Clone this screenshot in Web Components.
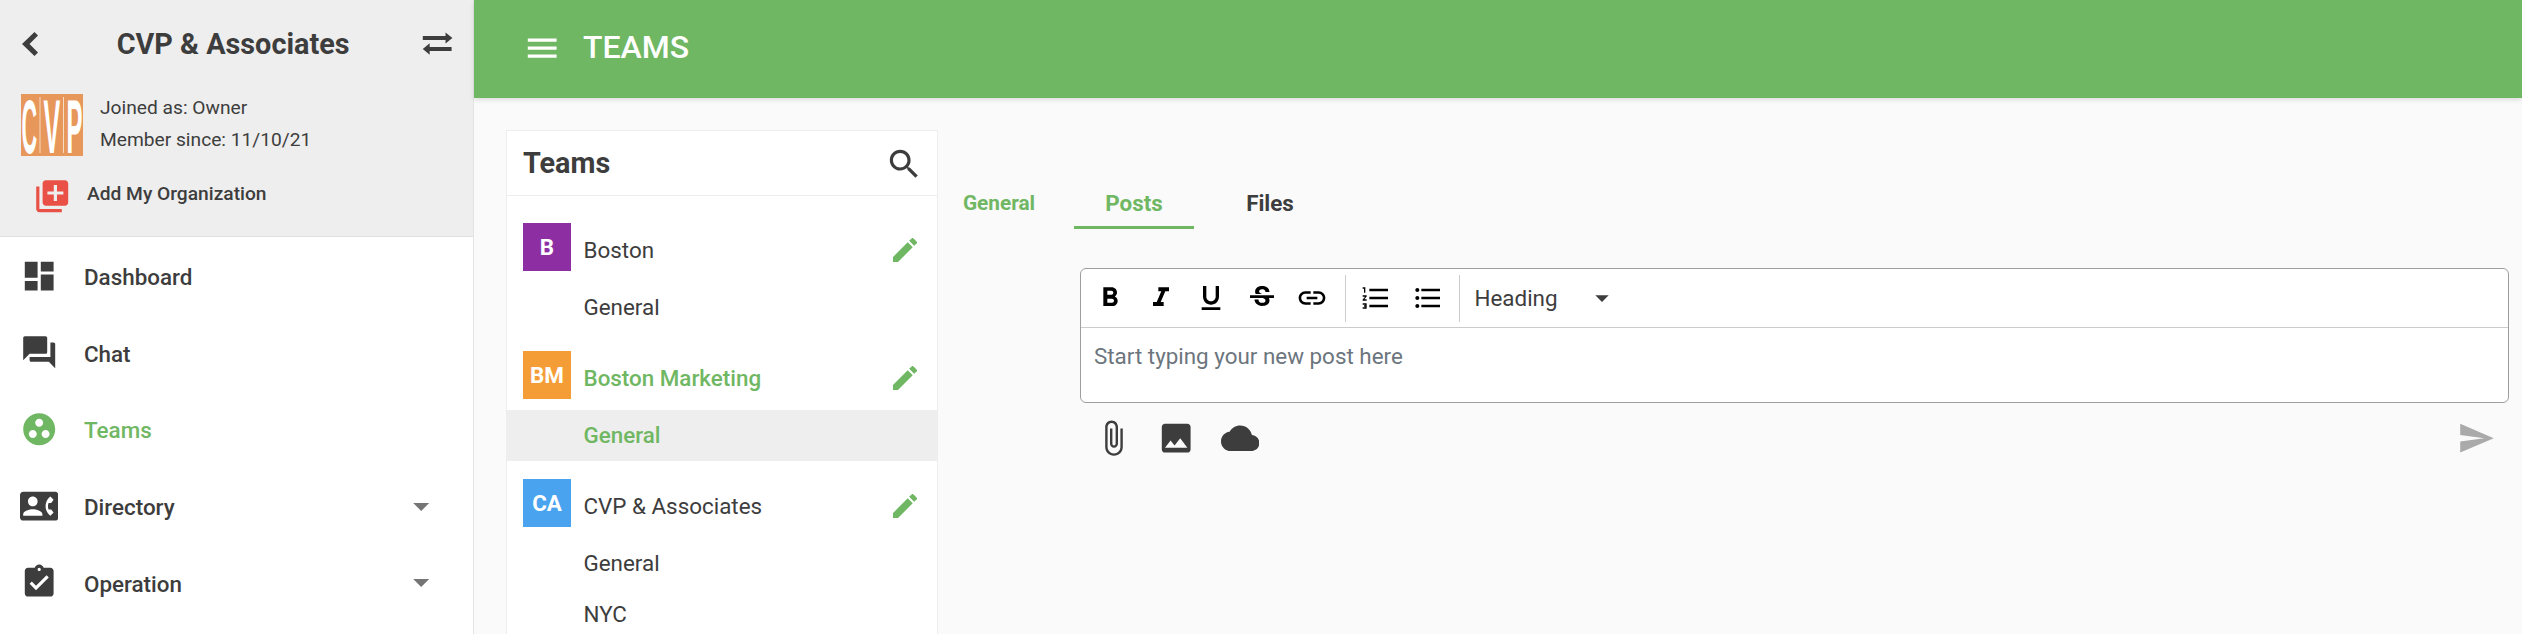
<!DOCTYPE html>
<html>
<head>
<meta charset="utf-8">
<title>Teams</title>
<style>
  html, body { margin: 0; height: 100%; overflow: hidden; }
  body { font-family: Roboto, "Liberation Sans", sans-serif; color: #3d3d3d; background: #fafafa; }
</style>
</head>
<body>
<app-shell>
  <side-bar slot="side"></side-bar>
  <top-bar slot="top" title="TEAMS"></top-bar>
  <teams-panel slot="panel"></teams-panel>
  <post-area slot="content"></post-area>
</app-shell>

<script>
const ICONS = {
  dashboard: 'M3 13h8V3H3v10zm0 8h8v-6H3v6zm10 0h8V11h-8v10zm0-18v6h8V3h-8z',
  forum: 'M21 6h-2v9H6v2c0 .55.45 1 1 1h11l4 4V7c0-.55-.45-1-1-1zm-4 6V3c0-.55-.45-1-1-1H3c-.55 0-1 .45-1 1v14l4-4h10c.55 0 1-.45 1-1z',
  workspaces: 'M12 2C6.48 2 2 6.48 2 12s4.48 10 10 10 10-4.48 10-10S17.52 2 12 2zM8 17.5c-1.38 0-2.5-1.12-2.5-2.5s1.12-2.5 2.5-2.5 2.5 1.12 2.5 2.5-1.12 2.5-2.5 2.5zM9.5 8c0-1.38 1.12-2.5 2.5-2.5s2.5 1.12 2.5 2.5-1.12 2.5-2.5 2.5S9.5 9.38 9.5 8zm6.5 9.5c-1.38 0-2.5-1.12-2.5-2.5s1.12-2.5 2.5-2.5 2.5 1.12 2.5 2.5-1.12 2.5-2.5 2.5z',
  contact: 'M22 3H2C.9 3 0 3.9 0 5v14c0 1.1.9 2 2 2h20c1.1 0 1.99-.9 1.99-2L24 5c0-1.1-.9-2-2-2zM8 6c1.66 0 3 1.34 3 3s-1.34 3-3 3-3-1.34-3-3 1.34-3 3-3zm6 12H2v-1c0-2 4-3.1 6-3.1s6 1.1 6 3.1v1zm3.85-4h1.64L21 16l-1.99 1.99c-1.31-.98-2.28-2.38-2.73-3.99-.18-.64-.28-1.31-.28-2s.1-1.36.28-2c.45-1.62 1.42-3.01 2.73-3.99L21 8l-1.51 2h-1.64c-.22.63-.35 1.3-.35 2s.13 1.37.35 2z',
  assignment: 'M19 3h-4.18C14.4 1.84 13.3 1 12 1c-1.3 0-2.4.84-2.82 2H5c-1.1 0-2 .9-2 2v14c0 1.1.9 2 2 2h14c1.1 0 2-.9 2-2V5c0-1.1-.9-2-2-2zm-7 0c.55 0 1 .45 1 1s-.45 1-1 1-1-.45-1-1 .45-1 1-1zm-2 14l-4-4 1.41-1.41L10 14.17l6.59-6.59L18 9l-8 8z',
  drop: 'M7 10l5 5 5-5z',
  back: 'M8 12L14.25 6 16 7.75 11.75 12 16 16.25 14.25 18z',
  swap: 'M3 6.9h14.2V4.7L21.5 8.1l-4.3 3.4V9.4H3zM21 13.75H7.3V11.4L3 15l4.3 3.6v-2.35H21z',
  libraryadd: 'M4 6H2v14c0 1.1.9 2 2 2h14v-2H4V6zm16-4H8c-1.1 0-2 .9-2 2v12c0 1.1.9 2 2 2h12c1.1 0 2-.9 2-2V4c0-1.1-.9-2-2-2zm-1 9h-4v4h-2v-4H9V9h4V5h2v4h4v2z',
  search: 'M15.5 14h-.79l-.28-.27C15.41 12.59 16 11.11 16 9.5 16 5.91 13.09 3 9.5 3S3 5.91 3 9.5 5.91 16 9.5 16c1.61 0 3.09-.59 4.23-1.57l.27.28v.79l5 4.99L20.49 19l-4.99-5zm-6 0C7.01 14 5 11.99 5 9.5S7.01 5 9.5 5 14 7.01 14 9.5 11.99 14 9.5 14z',
  edit: 'M3 17.25V21h3.75L17.81 9.94l-3.75-3.75L3 17.25zM20.71 7.04c.39-.39.39-1.02 0-1.41l-2.34-2.34c-.39-.39-1.02-.39-1.41 0l-1.83 1.83 3.75 3.75 1.83-1.83z',
  menu: 'M3 18h18v-2H3v2zm0-5h18v-2H3v2zm0-7v2h18V6H3z',
  bold: 'M15.6 10.79c.97-.67 1.65-1.77 1.65-2.79 0-2.26-1.75-4-4-4H7v14h7.04c2.09 0 3.71-1.7 3.71-3.79 0-1.52-.86-2.82-2.15-3.42zM10 6.5h3c.83 0 1.5.67 1.5 1.5s-.67 1.5-1.5 1.5h-3v-3zm3.5 9H10v-3h3.5c.83 0 1.5.67 1.5 1.5s-.67 1.5-1.5 1.5z',
  italic: 'M10 4v3h2.21l-3.42 8H6v3h8v-3h-2.21l3.42-8H18V4z',
  underline: 'M12 17c3.31 0 6-2.69 6-6V3h-2.5v8c0 1.93-1.57 3.5-3.5 3.5S8.5 12.93 8.5 11V3H6v8c0 3.31 2.69 6 6 6zm-7 2v2h14v-2H5z',
  strike: 'M6.85 7.08C6.85 4.37 9.45 3 12.24 3c1.64 0 3 .49 3.9 1.28.77.65 1.46 1.73 1.46 3.24h-3.01c0-.31-.05-.59-.15-.85-.29-.86-1.2-1.28-2.25-1.28-1.86 0-2.34 1.02-2.34 1.7 0 .48.25.88.74 1.21.38.25.77.48 1.41.7H7.39c-.21-.34-.54-.89-.54-1.92zM21 12v-2H3v2h9.62c1.15.45 1.96.75 1.96 1.97 0 1-.81 1.67-2.28 1.67-1.54 0-2.93-.54-2.93-2.51H6.4c0 .55.08 1.13.24 1.58.81 2.29 3.29 3.3 5.67 3.3 2.27 0 5.3-.89 5.3-4.05 0-.3-.03-1.16-.41-1.96H21z',
  link: 'M3.9 12c0-1.71 1.39-3.1 3.1-3.1h4V7H7c-2.76 0-5 2.24-5 5s2.24 5 5 5h4v-1.9H7c-1.71 0-3.1-1.39-3.1-3.1zM8 13h8v-2H8v2zm9-6h-4v1.9h4c1.71 0 3.1 1.39 3.1 3.1s-1.39 3.1-3.1 3.1h-4V17h4c2.76 0 5-2.24 5-5s-2.24-5-5-5z',
  olist: 'M2 17h2v.5H3v1h1v.5H2v1h3v-4H2v1zm1-9h1V4H2v1h1v3zm-1 3h1.8L2 13.1v.9h3v-1H3.2L5 10.9V10H2v1zm5-6v2h14V5H7zm0 14h14v-2H7v2zm0-6h14v-2H7v2z',
  ulist: 'M4 10.5c-.83 0-1.5.67-1.5 1.5s.67 1.5 1.5 1.5 1.5-.67 1.5-1.5-.67-1.5-1.5-1.5zm0-6c-.83 0-1.5.67-1.5 1.5S3.17 7.5 4 7.5 5.5 6.83 5.5 6 4.83 4.5 4 4.5zm0 12c-.83 0-1.5.68-1.5 1.5s.68 1.5 1.5 1.5 1.5-.68 1.5-1.5-.67-1.5-1.5-1.5zM7 19h14v-2H7v2zm0-6h14v-2H7v2zm0-8v2h14V5H7z',
  attach: 'M16.5 6v11.5c0 2.21-1.79 4-4 4s-4-1.79-4-4V5c0-1.38 1.12-2.5 2.5-2.5s2.5 1.12 2.5 2.5v10.5c0 .55-.45 1-1 1s-1-.45-1-1V6H10v9.5c0 1.38 1.12 2.5 2.5 2.5s2.5-1.12 2.5-2.5V5c0-2.21-1.79-4-4-4S7 2.79 7 5v12.5c0 3.04 2.46 5.5 5.5 5.5s5.5-2.46 5.5-5.5V6h-1.5z',
  image: 'M21 19V5c0-1.1-.9-2-2-2H5c-1.1 0-2 .9-2 2v14c0 1.1.9 2 2 2h14c1.1 0 2-.9 2-2zM8.5 13.5l2.5 3.01L14.5 12l4.5 6H5l3.5-4.5z',
  cloud: 'M19.35 10.04C18.67 6.59 15.64 4 12 4 9.11 4 6.6 5.64 5.35 8.04 2.34 8.36 0 10.91 0 14c0 3.31 2.69 6 6 6h13c2.76 0 5-2.24 5-5 0-2.64-2.05-4.78-4.65-4.96z',
  send: 'M2.01 21L23 12 2.01 3 2 10l15 2-15 2z'
}

class MIcon extends HTMLElement {
  connectedCallback() {
    const size = this.getAttribute('size') || 38.4
    this.attachShadow({ mode: 'open' }).innerHTML = `
      <style>
        :host { display: inline-flex; flex: none; width: ${size}px; height: ${size}px; color: inherit; }
        svg { width: 100%; height: 100%; fill: currentColor; display: block; }
      </style>
      <svg viewBox="0 0 24 24"><path fill-rule="evenodd" d="${ICONS[this.getAttribute('name')]}"/></svg>`
  }
}
customElements.define('m-icon', MIcon)

class AppShell extends HTMLElement {
  constructor() {
    super()
    this.attachShadow({ mode: 'open' }).innerHTML = `
      <style>
        :host { display: flex; width: 2522px; height: 634px; overflow: hidden; }
        .main { flex: 1; min-width: 0; display: flex; flex-direction: column; }
        .body { flex: 1; display: flex; padding: 32px 0 0 32px; min-height: 0; }
        .right { flex: 1; min-width: 0; }
      </style>
      <slot name="side"></slot>
      <div class="main">
        <slot name="top"></slot>
        <div class="body">
          <slot name="panel"></slot>
          <div class="right"><slot name="content"></slot></div>
        </div>
      </div>`
  }
}
customElements.define('app-shell', AppShell)

class SideBar extends HTMLElement {
  constructor() {
    super()
    this.attachShadow({ mode: 'open' }).innerHTML = `
      <style>
        :host { display: block; width: 474px; height: 634px; flex: none; box-sizing: border-box; border-right: 1px solid #e4e4e4; background: #fff; }
        .head { height: 237px; box-sizing: border-box; background: #eee; border-bottom: 1px solid #e0e0e0; padding-top: 20px; }
        .title { display: flex; align-items: center; height: 48px; padding: 0 16.4px 0 6px; }
        .title h1 { flex: 1; margin: 0; padding-right: 6px; text-align: center; font-size: 28.8px; line-height: 48px; font-weight: 700; }
        .who { display: flex; align-items: center; gap: 17px; margin: 25px 0 0 21px; }
        .who svg { width: 62px; height: 62px; display: block; overflow: visible; }
        .who p { margin: 0; font-size: 19.2px; line-height: 32px; }
        .who div { margin-top: -1px; }
        .add { display: flex; align-items: center; gap: 15.6px; margin: 21px 0 0 33px; font-size: 19.2px; font-weight: 500; }
        .add m-icon { color: #ea5146; }
        .add span { margin-top: -6px; }
        nav { padding-top: 2px; }
      </style>
      <div class="head">
        <div class="title">
          <m-icon name="back" size="48"></m-icon>
          <h1>CVP &amp; Associates</h1>
          <m-icon name="swap"></m-icon>
        </div>
        <div class="who">
          <svg viewBox="0 0 62 62" role="img" aria-label="CVP">
            <rect width="62" height="62" fill="#e8975b"/>
            <g fill="#fff" font-family="'Liberation Sans', sans-serif" font-size="20" font-weight="700">
              <text transform="translate(0.5 59) scale(1.08 3.8)">C</text>
              <text transform="translate(22.5 59) scale(1.25 3.8)">V</text>
              <text transform="translate(45.5 59) scale(1.2 3.8)">P</text>
            </g>
            <rect x="18.5" y="3" width="1" height="56" fill="#f6dcc6"/>
            <rect x="42" y="3" width="1" height="56" fill="#f6dcc6"/>
          </svg>
          <div>
            <p>Joined as: Owner</p>
            <p>Member since: 11/10/21</p>
          </div>
        </div>
        <div class="add">
          <m-icon name="libraryadd"></m-icon>
          <span>Add My Organization</span>
        </div>
      </div>
      <nav>
        <nav-item icon="dashboard">Dashboard</nav-item>
        <nav-item icon="forum">Chat</nav-item>
        <nav-item icon="workspaces" active>Teams</nav-item>
        <nav-item icon="contact" caret>Directory</nav-item>
        <nav-item icon="assignment" caret>Operation</nav-item>
      </nav>`
  }
}

class NavItem extends HTMLElement {
  connectedCallback() {
    const caret = this.hasAttribute('caret') ? '<m-icon class="caret" name="drop"></m-icon>' : ''
    this.attachShadow({ mode: 'open' }).innerHTML = `
      <style>
        :host { display: flex; align-items: center; height: 76.7px; padding-left: 20px; padding-right: 33px; font-size: 22.4px; font-weight: 500; color: #3d3d3d; }
        :host([active]) { color: #70b763; }
        .ic { width: 38.4px; display: flex; justify-content: center; margin-right: 25.6px; margin-top: -3px; }
        .txt { flex: 1; margin-top: -1px; }
        .caret { color: #757575; margin-top: -3px; }
      </style>
      <span class="ic"><m-icon name="${this.getAttribute('icon')}"></m-icon></span>
      <span class="txt"><slot></slot></span>
      ${caret}`
  }
}
customElements.define('nav-item', NavItem)
customElements.define('side-bar', SideBar)

class TopBar extends HTMLElement {
  connectedCallback() {
    this.attachShadow({ mode: 'open' }).innerHTML = `
      <style>
        :host { display: flex; align-items: center; flex: none; height: 98px; background: #70b763; color: #fff; padding-left: 48.5px; box-shadow: 0 2px 5px rgba(0,0,0,.12); position: relative; }
        span { font-size: 32px; font-weight: 500; margin-left: 22px; margin-top: -5px; }
        m-icon { margin-top: -2px; }
      </style>
      <m-icon name="menu"></m-icon>
      <span>${this.getAttribute('title')}</span>`
  }
}
customElements.define('top-bar', TopBar)

class TeamsPanel extends HTMLElement {
  constructor() {
    super()
    this.attachShadow({ mode: 'open' }).innerHTML = `
      <style>
        :host { display: block; flex: none; width: 432px; box-sizing: border-box; background: #fff; border: 1px solid #eee; border-bottom: 0; }
        header { display: flex; align-items: center; justify-content: space-between; height: 65px; box-sizing: border-box; border-bottom: 1px solid #eee; padding: 0 14px 0 16px; }
        h2 { margin: 0; font-size: 28.8px; font-weight: 700; }
        header m-icon { margin-top: 2px; }
        .list { padding-top: 9px; }
      </style>
      <header><h2>Teams</h2><m-icon name="search"></m-icon></header>
      <div class="list">
        <team-group name="Boston" initials="B" color="#8e2ea3">
          <team-channel>General</team-channel>
        </team-group>
        <team-group name="Boston Marketing" initials="BM" color="#f49d37" active>
          <team-channel active>General</team-channel>
        </team-group>
        <team-group name="CVP &amp; Associates" initials="CA" color="#4aa3ef">
          <team-channel>General</team-channel>
          <team-channel>NYC</team-channel>
        </team-group>
      </div>`
  }
}

class TeamGroup extends HTMLElement {
  connectedCallback() {
    this.attachShadow({ mode: 'open' }).innerHTML = `
      <style>
        :host { display: block; padding-top: 18px; }
        .row { display: flex; align-items: center; height: 48px; padding: 0 16px 0 16px; margin-bottom: 11px; font-size: 22.4px; }
        :host([active]) .row { color: #70b763; font-weight: 500; }
        .av { width: 48px; height: 48px; flex: none; display: flex; align-items: center; justify-content: center; color: #fff; font-weight: 700; font-size: 22.4px; background: ${this.getAttribute('color')}; margin-right: 12.5px; }
        .name { flex: 1; padding-top: 6px; }
        m-icon { color: #70b763; margin-top: 5px; }
      </style>
      <div class="row">
        <span class="av">${this.getAttribute('initials')}</span>
        <span class="name">${this.getAttribute('name').replace('&', '&amp;')}</span>
        <m-icon name="edit" size="32"></m-icon>
      </div>
      <slot></slot>`
  }
}

class TeamChannel extends HTMLElement {
  constructor() {
    super()
    this.attachShadow({ mode: 'open' }).innerHTML = `
      <style>
        :host { display: flex; align-items: center; height: 51px; box-sizing: border-box; padding: 0 0 2px 76.5px; font-size: 22.4px; }
        :host([active]) { background: #eee; color: #70b763; font-weight: 500; }
      </style>
      <slot></slot>`
  }
}
customElements.define('team-channel', TeamChannel)
customElements.define('team-group', TeamGroup)
customElements.define('teams-panel', TeamsPanel)

class PostArea extends HTMLElement {
  constructor() {
    super()
    this.attachShadow({ mode: 'open' }).innerHTML = `
      <style>
        :host { display: block; padding-top: 48px; }
        .tabs { display: flex; gap: 16px; height: 51px; }
        .tab { width: 120px; box-sizing: border-box; display: flex; align-items: center; justify-content: center; font-size: 22.4px; font-weight: 700; padding-top: 2px; border-bottom: 3px solid transparent; }
        .tab.small { font-size: 20.8px; padding-left: 2px; }
        .tab.green { color: #70b763; }
        .tab.on { border-bottom-color: #70b763; }
        .wrap { margin: 39px 13px 0 142px; }
        .bottom { display: flex; align-items: center; gap: 25px; margin: 16px 14px 0 14px; color: #3d3d3d; }
        .send { margin-left: auto; color: #aaa; }
      </style>
      <div class="tabs">
        <div class="tab green small">General</div>
        <div class="tab green on">Posts</div>
        <div class="tab">Files</div>
      </div>
      <div class="wrap">
        <rich-editor placeholder="Start typing your new post here"></rich-editor>
        <div class="bottom">
          <m-icon name="attach"></m-icon>
          <m-icon name="image"></m-icon>
          <m-icon name="cloud"></m-icon>
          <m-icon class="send" name="send"></m-icon>
        </div>
      </div>`
  }
}

class RichEditor extends HTMLElement {
  connectedCallback() {
    const btn = n => `<span class="btn"><m-icon name="${n}" size="32"></m-icon></span>`
    this.attachShadow({ mode: 'open' }).innerHTML = `
      <style>
        :host { display: block; box-sizing: border-box; height: 135px; background: #fff; border: 1px solid #9e9e9e; border-radius: 6px; overflow: hidden; }
        .bar { display: flex; align-items: center; height: 59px; box-sizing: border-box; border-bottom: 1px solid #ccc; padding-left: 4px; color: #000; }
        .btn { width: 50.5px; display: flex; justify-content: center; }
        .sep { width: 1px; height: 47px; background: #ccc; margin: 0 5px 0 7px; }
        .sep.last { margin: 0 5px 0 5.5px; }
        .ul { margin-left: 1.5px; }
        .select { display: flex; align-items: center; color: #3d3d3d; font-size: 22.4px; margin-left: 10px; width: 146px; }
        .select span { flex: 1; }
        .select m-icon { color: #3d3d3d; margin-right: 3px; }
        .text { padding: 16px 13px; font-size: 22.4px; color: #6c757d; line-height: 24px; }
      </style>
      <div class="bar">
        ${['bold', 'italic', 'underline', 'strike', 'link'].map(btn).join('')}
        <span class="sep"></span>
        ${btn('olist')}
        <span class="btn ul"><m-icon name="ulist" size="32"></m-icon></span>
        <span class="sep last"></span>
        <div class="select"><span>Heading</span><m-icon name="drop" size="32"></m-icon></div>
      </div>
      <div class="text">${this.getAttribute('placeholder')}</div>`
  }
}
customElements.define('rich-editor', RichEditor)
customElements.define('post-area', PostArea)
</script>
</body>
</html>
